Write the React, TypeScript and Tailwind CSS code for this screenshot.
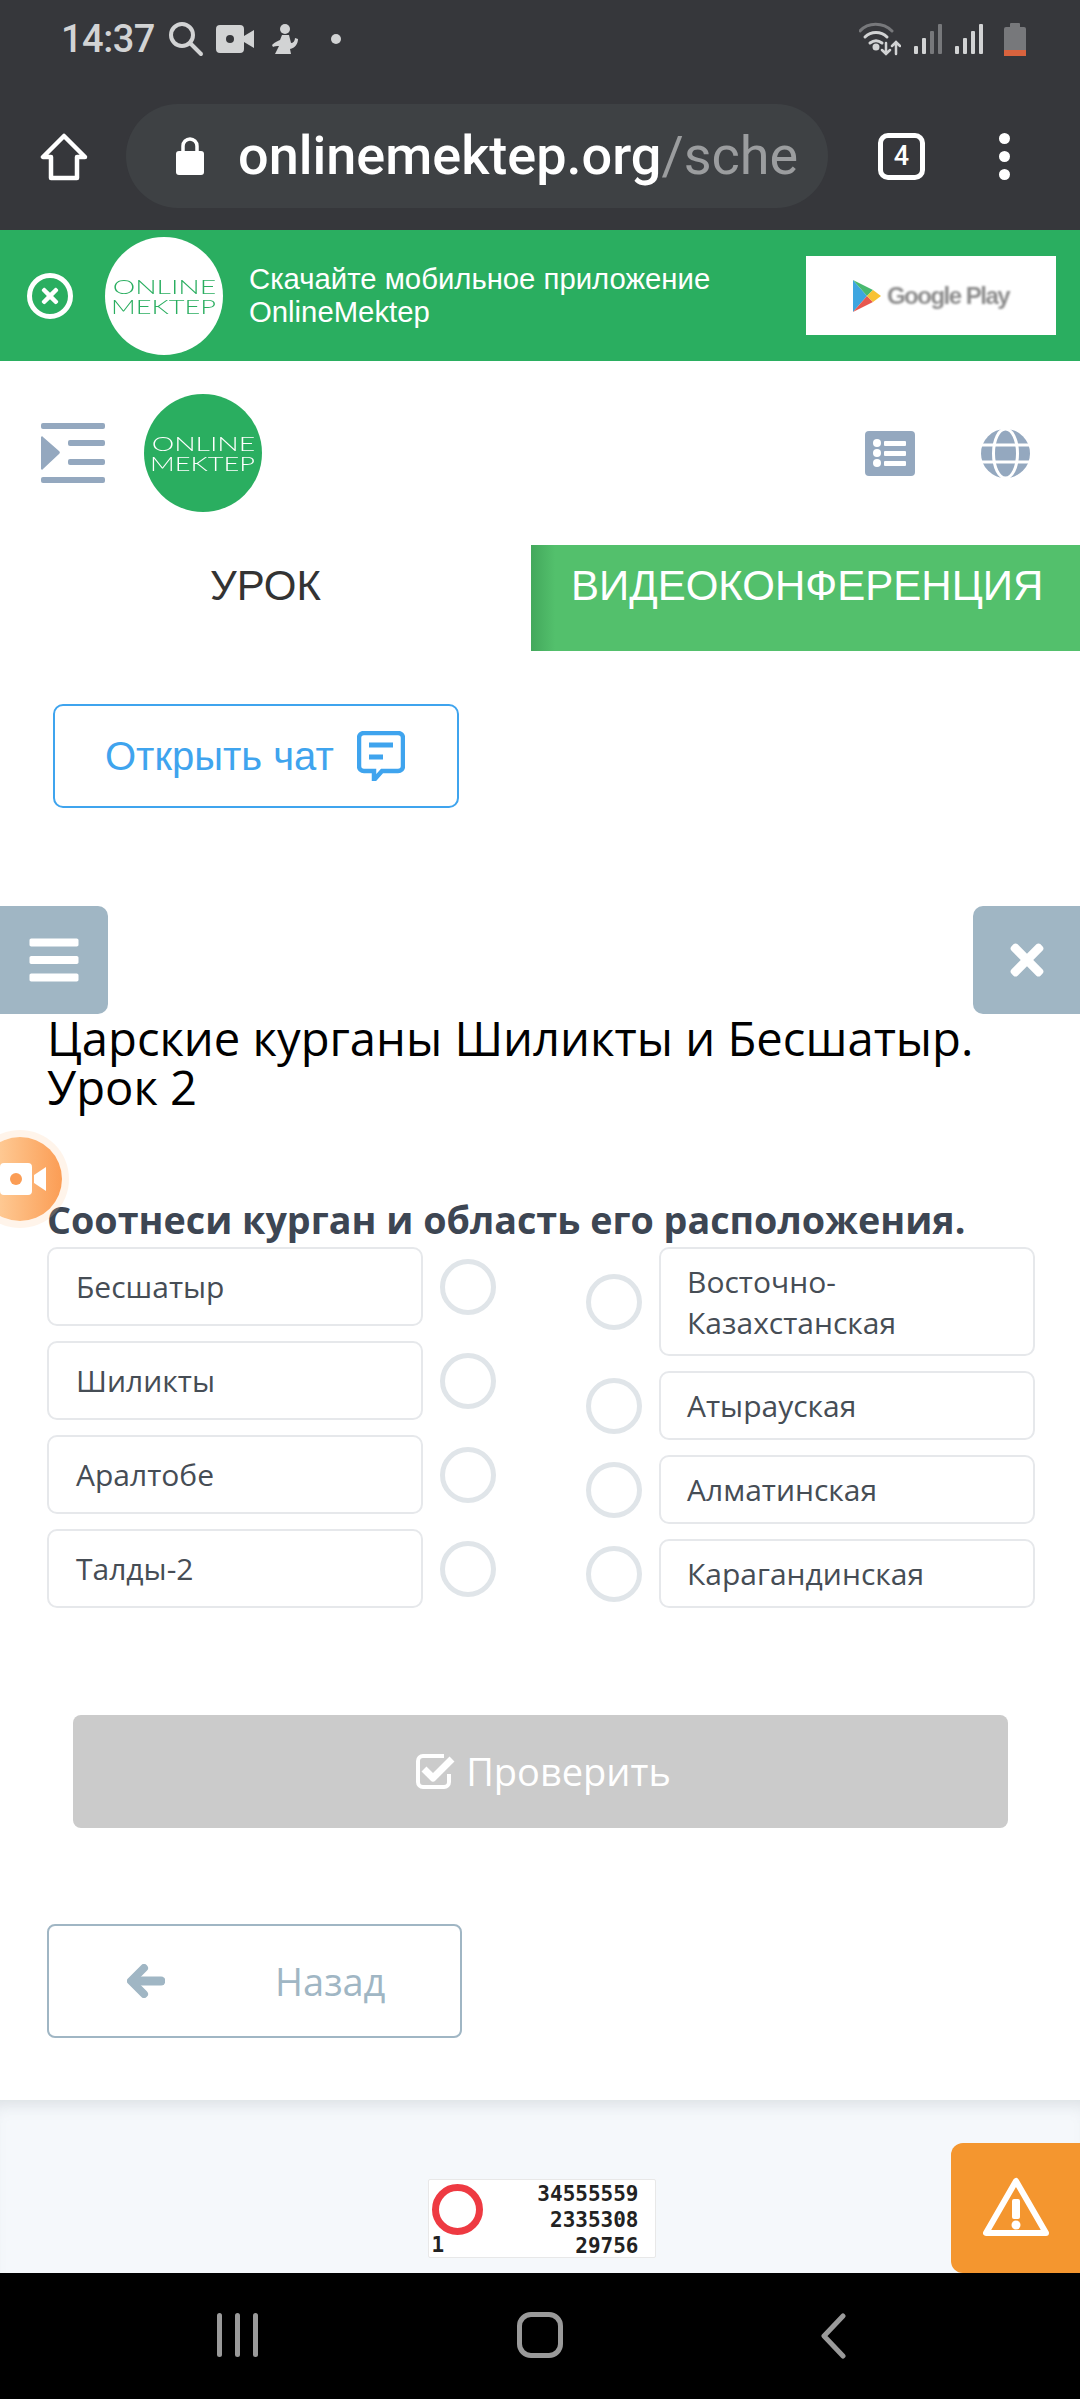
import React from 'react';
import { FaBars, FaTimes } from 'react-icons/fa';

const leftItems = ['Бесшатыр', 'Шиликты', 'Аралтобе', 'Талды-2'];
const rightItems = [
  { label: 'Восточно-\nКазахстанская', height: 'h-[109px]' },
  { label: 'Атырауская', height: 'h-[69px]' },
  { label: 'Алматинская', height: 'h-[69px]' },
  { label: 'Карагандинская', height: 'h-[69px]' },
];

function Radio() {
  return <div className="h-[56px] w-[56px] shrink-0 rounded-full border-[5px] border-[#e0e5e9]" />;
}

function Option({ label, className }: { label: string; className: string }) {
  return (
    <div className={`flex items-center whitespace-pre-line rounded-[10px] border-2 border-[#e6e8eb] bg-white text-[30px] leading-[41px] text-[#464d55] ${className}`}>
      {label}
    </div>
  );
}

function Logo({ inverted, className }: { inverted?: boolean; className: string }) {
  return (
    <div className={`flex h-[118px] w-[118px] shrink-0 flex-col items-center justify-center rounded-full font-['Lato'] text-[20px] font-light leading-[20px] ${inverted ? 'bg-white text-[#2aae60]' : 'bg-[#2aae60] text-white'} ${className}`}>
      <span className="scale-x-[1.42]">ONLINE</span>
      <span className="scale-x-[1.36]">MEKTEP</span>
    </div>
  );
}

function StatusBar() {
  return (
    <div className="flex h-[80px] items-center justify-between pb-[2px] pl-[61px] pr-[54px] text-[#d2d3d4]">
      <div className="flex items-center">
        <span className="font-['Roboto'] text-[38px] font-medium leading-none tracking-[-0.5px]">14:37</span>
        <svg className="ml-[13px]" width="36" height="36" viewBox="0 0 36 36" fill="none" stroke="currentColor" strokeWidth="4" strokeLinecap="round">
          <circle cx="14" cy="14" r="11" />
          <path d="M22 22l11 11" />
        </svg>
        <svg className="ml-[12px]" width="38" height="28" viewBox="0 0 38 28" fill="currentColor">
          <path d="M4 0h20a4 4 0 0 1 4 4v20a4 4 0 0 1-4 4H4a4 4 0 0 1-4-4V4a4 4 0 0 1 4-4zM28 11l10-6v18l-10-6z" />
          <circle cx="14" cy="14" r="4" fill="#36373b" />
        </svg>
        <svg className="ml-[17px]" width="28" height="32" viewBox="0 0 28 32" fill="currentColor">
          <circle cx="14" cy="6" r="5" />
          <path d="M11 12h7l2 8c2 0 4-2 4-5l3 1c0 5-3 9-8 10l1 5H4l4-8c-2 0-5 0-6 1l-1-2c3-3 6-4 8-5z" />
        </svg>
        <span className="ml-[32px] h-[10px] w-[10px] rounded-full bg-current" />
      </div>
      <div className="flex items-center gap-[13px]">
        <svg width="42" height="34" viewBox="0 0 42 34" fill="none" stroke="currentColor" strokeWidth="3" strokeLinecap="round">
          <path d="M1 9C9 0 24 0 33 9" stroke="#77787b" />
          <path d="M6 15c6-6 16-6 22 0" />
          <path d="M11 21c4-3 8-3 12 0" />
          <circle cx="17" cy="25" r="2" fill="currentColor" />
          <path d="M27 21v11M23 28l4 4 4-4M37 32V20M33 24l4-4 4 4" strokeWidth="2.5" />
        </svg>
        <svg width="28" height="32" viewBox="0 0 28 32">
          <rect x="0" y="23" width="4" height="8" rx="1" fill="#d2d3d4" />
          <rect x="8" y="15" width="4" height="16" rx="1" fill="#d2d3d4" />
          <rect x="16" y="8" width="4" height="23" rx="1" fill="#77787b" />
          <rect x="24" y="1" width="4" height="30" rx="1" fill="#77787b" />
        </svg>
        <svg width="28" height="32" viewBox="0 0 28 32" fill="#d2d3d4">
          <rect x="0" y="23" width="4" height="8" rx="1" />
          <rect x="8" y="15" width="4" height="16" rx="1" />
          <rect x="16" y="8" width="4" height="23" rx="1" />
          <rect x="24" y="1" width="4" height="30" rx="1" />
        </svg>
        <svg className="ml-[8px]" width="22" height="33" viewBox="0 0 22 33">
          <rect x="6" y="0" width="10" height="5" rx="1" fill="#77787b" />
          <rect x="0" y="4" width="22" height="29" rx="2" fill="#77787b" />
          <rect x="0" y="27" width="22" height="6" fill="#d9633e" />
        </svg>
      </div>
    </div>
  );
}

function Toolbar() {
  return (
    <div className="flex h-[150px] items-start pl-[40px] pt-[24px]">
      <svg className="mt-[29px]" width="48" height="48" viewBox="0 0 48 48" fill="none" stroke="white" strokeWidth="4.5" strokeLinejoin="round">
        <path d="M24 3L3 24h8v21h26V24h8z" />
      </svg>
      <div className="ml-[38px] flex h-[104px] w-[702px] items-center rounded-full bg-[#3e4144] pl-[50px]">
        <svg width="28" height="38" viewBox="0 0 28 38">
          <path d="M7 15V9a7 7 0 0 1 14 0v6" fill="none" stroke="white" strokeWidth="3.5" />
          <rect x="0" y="14" width="28" height="24" rx="3" fill="white" />
        </svg>
        <span className="ml-[34px] font-['Roboto'] text-[54px] font-medium leading-none text-white">
          onlinemektep.org<span className="font-normal text-[#9b9d9f]">/sche</span>
        </span>
      </div>
      <div className="ml-[50px] mt-[29px] flex h-[47px] w-[47px] items-center justify-center rounded-[10px] border-[5px] border-white font-['Roboto'] text-[27px] font-medium text-white">
        4
      </div>
      <div className="ml-[74px] mt-[29px] flex flex-col gap-[7px]">
        <span className="h-[11px] w-[11px] rounded-full bg-white" />
        <span className="h-[11px] w-[11px] rounded-full bg-white" />
        <span className="h-[11px] w-[11px] rounded-full bg-white" />
      </div>
    </div>
  );
}

function AppBanner() {
  return (
    <div className="flex h-[131px] items-center bg-[#2aae60] pl-[27px] pr-[24px] font-['Liberation_Sans'] text-white">
      <div className="flex h-[46px] w-[46px] shrink-0 items-center justify-center rounded-full border-[5px] border-white">
        <FaTimes className="text-[24px]" />
      </div>
      <Logo inverted className="ml-[32px]" />
      <div className="ml-[26px] mt-[-2px] text-[29.3px] leading-[33px]">
        <div>Скачайте мобильное приложение</div>
        <div>OnlineMektep</div>
      </div>
      <div className="ml-auto flex h-[79px] w-[250px] items-center justify-center bg-white">
        <svg width="28" height="32" viewBox="0 0 28 32">
          <path d="M0 0l14 16L0 32z" fill="#3ea6e0" />
          <path d="M0 0l20 10-6 6z" fill="#49b96f" />
          <path d="M0 32l20-10-6-6z" fill="#e8584f" />
          <path d="M20 10l8 6-8 6-6-6z" fill="#f8c234" />
        </svg>
        <span className="ml-[6px] text-[24px] font-bold tracking-[-1.5px] text-[#8c8c8c] blur-[0.8px]">Google Play</span>
      </div>
    </div>
  );
}

function PageHeader() {
  return (
    <div className="flex h-[184px] items-center pl-[41px] pr-[50px]">
      <svg width="64" height="60" viewBox="0 0 64 60" fill="#94a8bf">
        <rect x="0" y="0" width="64" height="6" rx="2" />
        <rect x="27" y="17" width="37" height="6" rx="2" />
        <rect x="27" y="36" width="37" height="6" rx="2" />
        <rect x="0" y="54" width="64" height="6" rx="2" />
        <path d="M0 15a1 1 0 0 1 2-1l16 14a2 2 0 0 1 0 3L2 46a1 1 0 0 1-2-1z" />
      </svg>
      <Logo className="ml-[39px]" />
      <svg className="ml-auto" width="50" height="45" viewBox="0 0 50 45">
        <rect width="50" height="45" rx="4" fill="#94a8bf" />
        <g fill="white">
          <circle cx="12" cy="12" r="4" />
          <circle cx="12" cy="22" r="4" />
          <circle cx="12" cy="32" r="4" />
          <rect x="19" y="10" width="22" height="5" rx="1" />
          <rect x="19" y="20" width="22" height="5" rx="1" />
          <rect x="19" y="30" width="22" height="5" rx="1" />
        </g>
      </svg>
      <svg className="ml-[66px]" width="49" height="49" viewBox="0 0 49 49" fill="#94a8bf">
        <circle cx="24.5" cy="24.5" r="24.5" />
        <g fill="none" stroke="white" strokeWidth="3">
          <path d="M0 16h49M0 33h49" />
          <ellipse cx="24.5" cy="24.5" rx="12" ry="24.5" />
        </g>
      </svg>
    </div>
  );
}

function Tabs() {
  return (
    <div className="flex h-[106px] font-['Liberation_Sans'] text-[42px]">
      <div className="w-[531px] pt-[17px] text-center leading-[48px] text-[#333333]">УРОК</div>
      <div className="flex-1 bg-[linear-gradient(90deg,#43a85c_0px,#53c06c_24px)] pl-[40px] pt-[17px] leading-[48px] text-white">
        ВИДЕОКОНФЕРЕНЦИЯ
      </div>
    </div>
  );
}

function Lesson() {
  return (
    <div className="relative bg-white font-['Open_Sans']">
      <div className="pl-[53px] pt-[53px]">
        <div className="flex h-[104px] w-[406px] items-center rounded-[10px] border-2 border-[#3fa4ee] pl-[50px] font-['Liberation_Sans'] text-[40px] text-[#3fa4ee]">
          Открыть чат
          <svg className="ml-[23px]" width="48" height="50" viewBox="0 0 48 50" fill="none">
            <path d="M7 2h34a5 5 0 0 1 5 5v28a5 5 0 0 1-5 5H25l-8 9v-9H7a5 5 0 0 1-5-5V7a5 5 0 0 1 5-5z" stroke="#3fa4ee" strokeWidth="4.5" />
            <path d="M12 14h24M12 26h14" stroke="#3fa4ee" strokeWidth="5" />
          </svg>
        </div>
      </div>

      <div className="mt-[98px] flex h-[108px] justify-between">
        <div className="flex w-[108px] items-center justify-center rounded-r-[10px] bg-[#a0b6c4] text-white">
          <FaBars className="text-[56px]" />
        </div>
        <div className="flex w-[107px] items-center justify-center rounded-l-[10px] bg-[#a0b6c4] text-white">
          <FaTimes className="text-[48px]" />
        </div>
      </div>

      <h1 className="pl-[47px] pr-[60px] text-[47.2px] leading-[49px] text-black">
        Царские курганы Шиликты и Бесшатыр. Урок 2
      </h1>

      {/* video call bubble lies over the page edge */}
      <div className="absolute left-[-22px] top-[486px] flex h-[84px] w-[84px] items-center justify-end rounded-full bg-[linear-gradient(90deg,#ffd8a8,#fb9d55)] pr-[16px] shadow-[0_0_0_7px_rgba(255,200,150,0.2)]">
        <svg width="46" height="32" viewBox="0 0 46 32">
          <path d="M4 0h24a4 4 0 0 1 4 4v24a4 4 0 0 1-4 4H4a4 4 0 0 1-4-4V4a4 4 0 0 1 4-4zM34 12l12-8v24l-12-8z" fill="white" />
          <circle cx="16" cy="16" r="6" fill="#fb9d55" />
        </svg>
      </div>

      <h2 className="mt-[83px] pl-[47px] text-[37.7px] font-bold leading-[50px] text-[#3d4653]">
        Соотнеси курган и область его расположения.
      </h2>

      <div className="flex justify-between pl-[47px] pr-[45px] pt-[2px]">
        <div className="flex flex-col gap-[15px]">
          {leftItems.map((item) => (
            <div key={item} className="flex items-center gap-[17px]">
              <Option label={item} className="h-[79px] w-[376px] pl-[27px]" />
              <Radio />
            </div>
          ))}
        </div>
        <div className="flex flex-col gap-[15px]">
          {rightItems.map((item) => (
            <div key={item.label} className="flex items-center gap-[17px]">
              <Radio />
              <Option label={item.label} className={`${item.height} w-[376px] pl-[26px]`} />
            </div>
          ))}
        </div>
      </div>

      <div className="ml-[73px] mr-[72px] mt-[107px] flex h-[113px] items-center justify-center gap-[10px] rounded-[8px] bg-[#cbcbcb] pl-[6px] text-[38px] text-white">
        <svg width="40" height="36" viewBox="0 0 40 36" fill="none" stroke="white" strokeLinejoin="round">
          <path d="M33 20v8a5 5 0 0 1-5 5H7a5 5 0 0 1-5-5V7a5 5 0 0 1 5-5h21" strokeWidth="4" />
          <path d="M8 15l9 9L36 5" strokeWidth="7" />
        </svg>
        Проверить
      </div>

      <div className="ml-[47px] mt-[96px] flex h-[114px] w-[415px] items-center rounded-[8px] border-2 border-[#a0b6c4] pl-[78px] text-[38px] text-[#a0b6c4]">
        <svg width="38" height="34" viewBox="0 0 38 34" fill="none" stroke="#a0b6c4" strokeLinecap="round" strokeLinejoin="round">
          <path d="M17 4L4 17l13 13" strokeWidth="8" />
          <path d="M8 17h26" strokeWidth="9" />
        </svg>
        <span className="ml-[110px]">Назад</span>
      </div>

      <div className="h-[62px]" />
    </div>
  );
}

function Footer() {
  return (
    <div className="relative flex h-[173px] justify-center bg-[#f5f8fb] pl-[3px] pt-[79px] shadow-[inset_0_14px_16px_-10px_rgba(120,130,140,0.22)]">
      <div className="flex h-[79px] w-[228px] justify-between rounded-[2px] border border-[#e8e8e8] bg-white pl-[3px] pr-[16px] font-['DejaVu_Sans_Mono'] text-[21px] font-bold leading-[26px] text-[#222222]">
        <div className="flex flex-col items-start pt-[4px]">
          <div className="h-[51px] w-[51px] shrink-0 rounded-full border-[7px] border-[#ee3a42]" />
          <span className="leading-[20px]">1</span>
        </div>
        <div className="pt-[1px] text-right">
          <div>34555559</div>
          <div>2335308</div>
          <div>29756</div>
        </div>
      </div>
      <div className="absolute right-0 top-[43px] flex h-[130px] w-[129px] items-center justify-center rounded-l-[12px] bg-[#f4962f]">
        <svg width="66" height="62" viewBox="0 0 66 62">
          <path d="M33 4L3 56h60z" fill="none" stroke="white" strokeWidth="6" strokeLinejoin="round" />
          <rect x="29" y="22" width="8" height="20" rx="2" fill="white" />
          <circle cx="33" cy="48" r="4.5" fill="white" />
        </svg>
      </div>
    </div>
  );
}

function NavBar() {
  return (
    <div className="flex h-[126px] items-start bg-black pl-[217px] pt-[40px]">
      <div className="flex h-[44px] gap-[13px]">
        <span className="h-full w-[5px] rounded-full bg-[#9a9a9a]" />
        <span className="h-full w-[5px] rounded-full bg-[#9a9a9a]" />
        <span className="h-full w-[5px] rounded-full bg-[#9a9a9a]" />
      </div>
      <div className="ml-[259px] mt-[-1px] h-[46px] w-[46px] rounded-[14px] border-[5px] border-[#9a9a9a]" />
      <svg className="ml-[256px]" width="28" height="46" viewBox="0 0 28 46" fill="none" stroke="#9a9a9a" strokeWidth="5" strokeLinecap="round" strokeLinejoin="round">
        <path d="M24 3L5 23l19 20" />
      </svg>
    </div>
  );
}

export default function App() {
  return (
    <div className="h-[2400px] w-[1080px] overflow-hidden bg-white">
      <div className="bg-[#36373b]">
        <StatusBar />
        <Toolbar />
      </div>
      <AppBanner />
      <PageHeader />
      <Tabs />
      <Lesson />
      <Footer />
      <NavBar />
    </div>
  );
}
